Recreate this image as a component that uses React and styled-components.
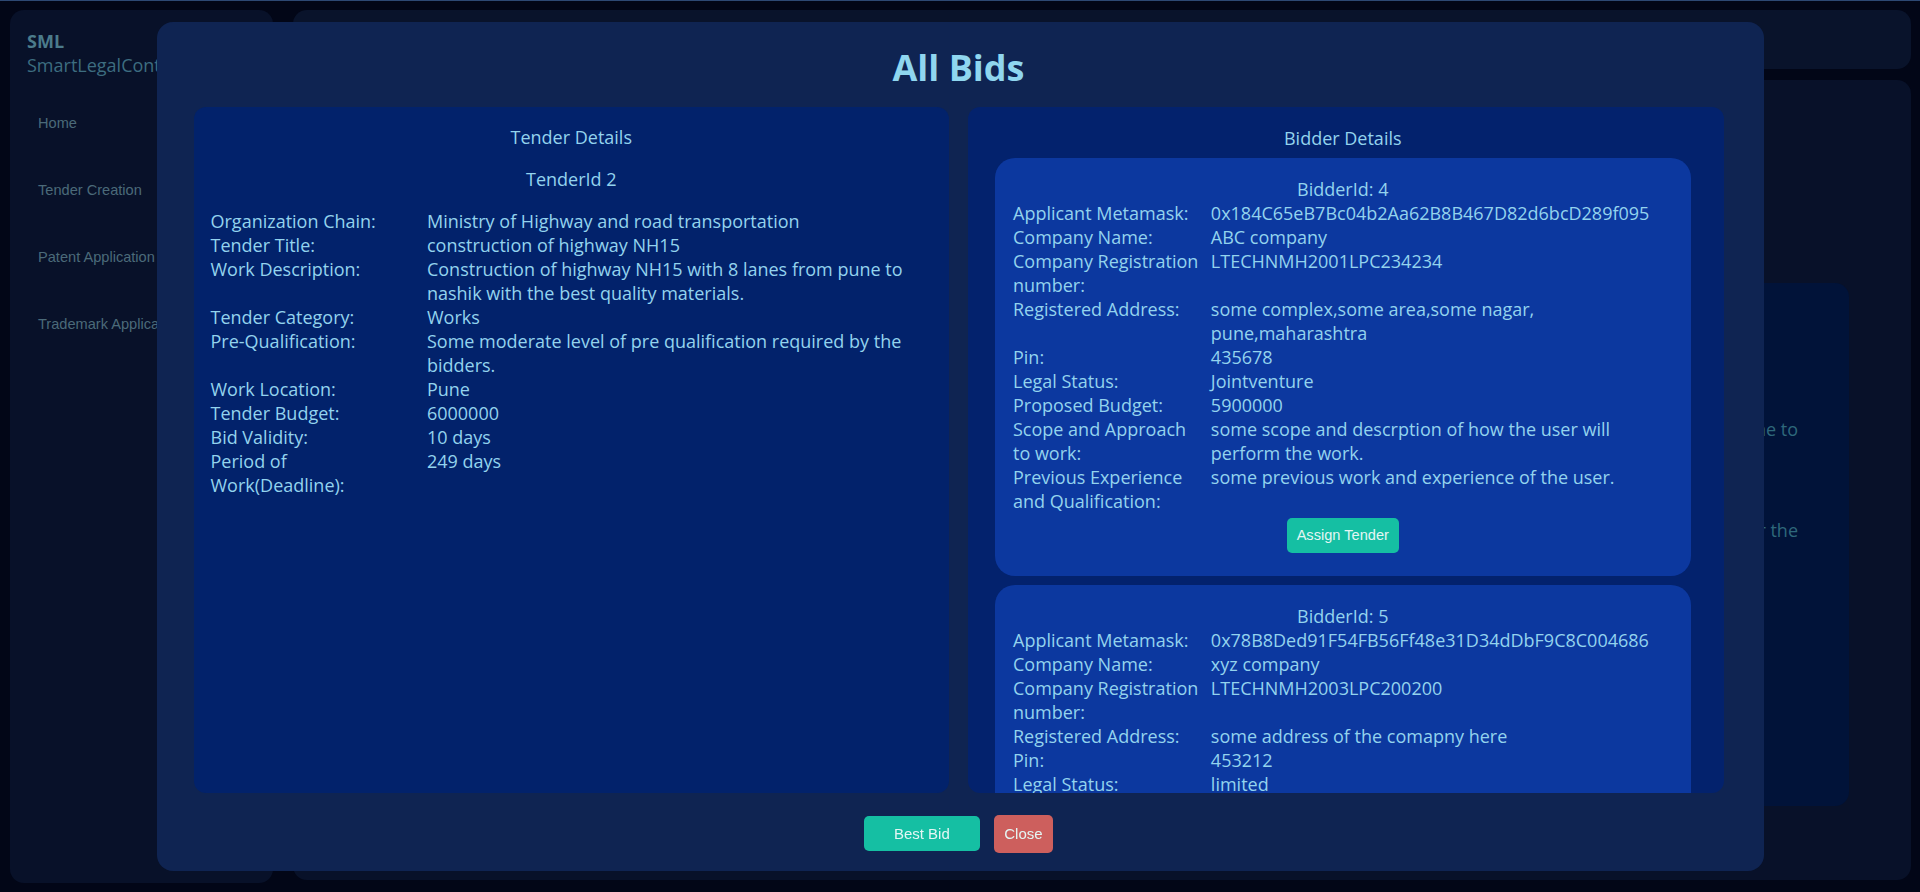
import React from 'react'
import styled, { createGlobalStyle } from 'styled-components'

const GlobalStyle = createGlobalStyle`
  * {
    box-sizing: border-box;
  }

  html, body {
    margin: 0;
    height: 100%;
  }

  body {
    background: #020617;
    font-family: "Open Sans", "Noto Sans", sans-serif;
    overflow: hidden;
  }
`

const tenderRows = [
  ['Organization Chain:', 'Ministry of Highway and road transportation'],
  ['Tender Title:', 'construction of highway NH15'],
  ['Work Description:', 'Construction of highway NH15 with 8 lanes from pune to nashik with the best quality materials.'],
  ['Tender Category:', 'Works'],
  ['Pre-Qualification:', 'Some moderate level of pre qualification required by the bidders.'],
  ['Work Location:', 'Pune'],
  ['Tender Budget:', '6000000'],
  ['Bid Validity:', '10 days'],
  ['Period of Work(Deadline):', '249 days'],
]

const bids = [
  {
    id: 4,
    rows: [
      ['Applicant Metamask:', '0x184C65eB7Bc04b2Aa62B8B467D82d6bcD289f095'],
      ['Company Name:', 'ABC company'],
      ['Company Registration number:', 'LTECHNMH2001LPC234234'],
      ['Registered Address:', 'some complex,some area,some nagar, pune,maharashtra'],
      ['Pin:', '435678'],
      ['Legal Status:', 'Jointventure'],
      ['Proposed Budget:', '5900000'],
      ['Scope and Approach to work:', 'some scope and descrption of how the user will perform the work.'],
      ['Previous Experience and Qualification:', 'some previous work and experience of the user.'],
    ],
  },
  {
    id: 5,
    rows: [
      ['Applicant Metamask:', '0x78B8Ded91F54FB56Ff48e31D34dDbF9C8C004686'],
      ['Company Name:', 'xyz company'],
      ['Company Registration number:', 'LTECHNMH2003LPC200200'],
      ['Registered Address:', 'some address of the comapny here'],
      ['Pin:', '453212'],
      ['Legal Status:', 'limited'],
      ['Proposed Budget:', '5800000'],
      ['Scope and Approach to work:', 'some scope of the work and the approach.'],
      ['Previous Experience and Qualification:', 'some previous experience of the company.'],
    ],
  },
]

const navItems = ['Home', 'Tender Creation', 'Patent Application', 'Trademark Application']

const App = () => {
  return (
    <>
      <GlobalStyle />
      <Page>
        <Sidebar>
          <Brand>
            <strong>SML</strong>
            <span>SmartLegalContract</span>
          </Brand>
          <Nav>
            {navItems.map(item => (
              <NavItem key={item}>{item}</NavItem>
            ))}
          </Nav>
        </Sidebar>
        <MainColumn>
          <TopBar />
          <MainPanel>
            <InfoCard>
              <InfoText>anyone to</InfoText>
              <InfoText>for the</InfoText>
            </InfoCard>
          </MainPanel>
        </MainColumn>
      </Page>

      <Overlay>
        <Modal>
          <Title>All Bids</Title>
          <Columns>
            <Panel $tone="#02226b" $pad="0 17px">
              <PanelHeading>Tender Details</PanelHeading>
              <PanelHeading>TenderId 2</PanelHeading>
              <DetailGrid>
                {tenderRows.map(([label, value]) => (
                  <React.Fragment key={label}>
                    <Label>{label}</Label>
                    <Value>{value}</Value>
                  </React.Fragment>
                ))}
              </DetailGrid>
            </Panel>
            <Panel $tone="#03226d" $pad="0 33px 0 27px">
              <PanelHeading $tight>Bidder Details</PanelHeading>
              {bids.map(bid => (
                <BidCard key={bid.id}>
                  <BidTitle>BidderId: {bid.id}</BidTitle>
                  <DetailGrid>
                    {bid.rows.map(([label, value]) => (
                      <React.Fragment key={label}>
                        <Label>{label}</Label>
                        <Value>{value}</Value>
                      </React.Fragment>
                    ))}
                  </DetailGrid>
                  <AssignRow>
                    <Button $variant="assign">Assign Tender</Button>
                  </AssignRow>
                </BidCard>
              ))}
            </Panel>
          </Columns>
          <Footer>
            <Button $variant="best">Best Bid</Button>
            <Button $variant="close">Close</Button>
          </Footer>
        </Modal>
      </Overlay>
    </>
  )
}

const Page = styled.div`
  display: flex;
  gap: 20px;
  height: 892px;
  padding: 9px 9px 9px 10px;
  border-top: 1px solid #2d4873;
`

const Sidebar = styled.aside`
  width: 263px;
  flex-shrink: 0;
  background: #081129;
  border-radius: 14px;
  padding: 19px 17px;
`

const Brand = styled.div`
  display: flex;
  flex-direction: column;
  font-size: 18px;
  line-height: 24px;
  white-space: nowrap;

  & strong {
    color: #4b7b8b;
    font-weight: 700;
  }

  & span {
    color: #3d6d80;
  }
`

const Nav = styled.nav`
  display: flex;
  flex-direction: column;
  margin-top: 12px;
`

const NavItem = styled.div`
  height: 67px;
  display: flex;
  align-items: center;
  padding-left: 11px;
  font-family: "Liberation Sans", Arial, sans-serif;
  font-size: 14.6px;
  color: #4b6a79;
  white-space: nowrap;
`

const MainColumn = styled.div`
  flex: 1;
  display: flex;
  flex-direction: column;
  gap: 11px;
  padding-bottom: 3px;
`

const TopBar = styled.header`
  height: 59px;
  background: #09132b;
  border-radius: 14px;
`

const MainPanel = styled.main`
  flex: 1;
  display: flex;
  background: #081129;
  border-radius: 14px;
  padding: 203px 62px 74px 360px;
`

const InfoCard = styled.div`
  flex: 1;
  background: #011339;
  border-radius: 14px;
  padding: 134px 51px 0;
`

const InfoText = styled.p`
  margin: 0 0 77px;
  text-align: right;
  font-size: 18px;
  line-height: 24px;
  color: #2e687b;
  white-space: nowrap;
`

const Overlay = styled.div`
  position: fixed;
  inset: 0;
  display: flex;
  align-items: center;
  justify-content: center;
`

const Modal = styled.div`
  width: 1607px;
  height: 849px;
  display: flex;
  flex-direction: column;
  background: #0f2452;
  border-radius: 16px;
  padding: 0 40px 0 37px;
`

const Title = styled.h1`
  margin: 0 0 15px;
  padding-top: 22px;
  line-height: 48px;
  font-size: 36px;
  font-weight: 700;
  text-align: center;
  color: #8fd6ef;
`

const Columns = styled.div`
  display: grid;
  grid-template-columns: 1fr 1fr;
  gap: 19px;
  height: 686px;
`

const Panel = styled.section`
  background: ${props => props.$tone};
  border-radius: 12px;
  padding: ${props => props.$pad};
  overflow-y: auto;
  scrollbar-width: none;
  color: #93d3ee;
  font-size: 18px;
  line-height: 24px;

  &::-webkit-scrollbar {
    display: none;
  }
`

const PanelHeading = styled.p`
  margin: ${props => (props.$tight ? '19px 0 8px' : '18px 0')};
  text-align: center;
`

const DetailGrid = styled.div`
  display: grid;
  grid-template-columns: 30% 70%;
`

const Label = styled.div`
  padding-right: 4px;
`

const Value = styled.div``

const BidCard = styled.div`
  background: #0c389f;
  border-radius: 20px;
  padding: 19px 18px 23px;
  margin-bottom: 9px;
`

const BidTitle = styled.div`
  text-align: center;
`

const AssignRow = styled.div`
  display: flex;
  justify-content: center;
  margin-top: 5px;
`

const buttonTones = {
  best: { bg: '#15bfa3', h: '35px', pad: '0 30px', size: '15px' },
  close: { bg: '#cd5f5d', h: '38px', pad: '0 10.5px', size: '15px' },
  assign: { bg: '#15bfa3', h: '35px', pad: '0 10px', size: '14.6px' },
}

const Button = styled.button`
  height: ${props => buttonTones[props.$variant].h};
  padding: ${props => buttonTones[props.$variant].pad};
  background: ${props => buttonTones[props.$variant].bg};
  border: none;
  border-radius: 5px;
  font-family: "Liberation Sans", Arial, sans-serif;
  font-size: ${props => buttonTones[props.$variant].size};
  color: #e4f6f4;
  cursor: pointer;
`

const Footer = styled.footer`
  flex: 1;
  display: flex;
  justify-content: center;
  align-items: center;
  gap: 14px;
  padding-top: 4px;
`

export default App
